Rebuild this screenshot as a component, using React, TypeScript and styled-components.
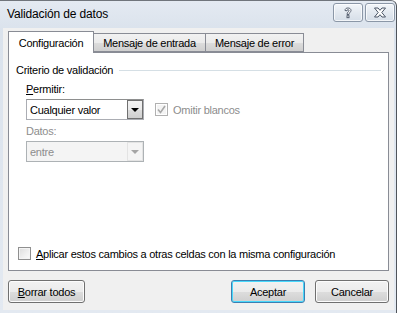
import React from "react";
import styled, { createGlobalStyle } from "styled-components";

const GlobalStyle = createGlobalStyle`
  html, body {
    margin: 0;
    padding: 0;
    background: #ffffff;
  }
  body {
    font-family: "Liberation Sans", Arial, sans-serif;
    font-size: 11px;
    letter-spacing: -0.25px;
    color: #000;
  }
`;

const Window = styled.div`
  width: 397px;
  height: 313px;
  box-sizing: border-box;
  display: flex;
  flex-direction: column;
  background: linear-gradient(180deg, #e4eaf2 0%, #dae2ec 30px, #e3e9f1 100%);
  border-top: 1px solid #70757c;
  border-right: 1px solid #4f545b;
  border-top-right-radius: 6px;
`;

const TitleBar = styled.div`
  height: 29px;
  display: flex;
  align-items: center;
  padding-left: 7px;
  padding-right: 1px;
  box-sizing: border-box;
`;

const Title = styled.div`
  flex: 1;
  font-size: 12px;
  letter-spacing: -0.15px;
  color: #000;
  padding-bottom: 1px;
`;

const CaptionButton = styled.div`
  width: 30px;
  height: 19px;
  box-sizing: border-box;
  margin-left: 2px;
  margin-bottom: 4px;
  border: 1px solid #8b97a7;
  border-radius: 3px;
  background: linear-gradient(180deg, #f3f6fa 0%, #e3e9f0 50%, #d6dee8 100%);
  box-shadow: inset 0 0 0 1px rgba(255, 255, 255, 0.7);
  display: flex;
  align-items: center;
  justify-content: center;
`;

const Client = styled.div`
  flex: 1;
  margin: 0 2px 3px 3px;
  background: #f0f0f0;
  display: flex;
  flex-direction: column;
  padding: 2px 5px 7px 5px;
`;

const TabRow = styled.div`
  display: flex;
  align-items: flex-end;
  height: 22px;
`;

const Tab = styled.div<{ $active?: boolean; $w: number }>`
  position: relative;
  box-sizing: border-box;
  width: ${(p) => p.$w}px;
  height: ${(p) => (p.$active ? 22 : 19)}px;
  margin-left: ${(p) => (p.$active ? 0 : -1)}px;
  margin-bottom: ${(p) => (p.$active ? -1 : 0)}px;
  z-index: ${(p) => (p.$active ? 2 : 1)};
  border: 1px solid #898c95;
  border-bottom: ${(p) => (p.$active ? "none" : "1px solid #898c95")};
  background: ${(p) =>
    p.$active
      ? "#ffffff"
      : "linear-gradient(180deg, #f2f2f2 0%, #ebebeb 50%, #dddddd 51%, #cfcfcf 100%)"};
  display: flex;
  align-items: center;
  justify-content: center;
  white-space: nowrap;
`;

const Panel = styled.div`
  height: 219px;
  box-sizing: border-box;
  border: 1px solid #898c95;
  background: #ffffff;
  display: flex;
  flex-direction: column;
  padding: 10px 7px 10px 7px;
`;

const GroupHeader = styled.div`
  display: flex;
  align-items: center;
  gap: 6px;
  height: 14px;
`;

const GroupLine = styled.div`
  flex: 1;
  height: 1px;
  background: #d5dfe5;
`;

const Fields = styled.div`
  margin-left: 10px;
  display: flex;
  flex-direction: column;
`;

const FieldLabel = styled.div<{ $disabled?: boolean }>`
  height: 14px;
  line-height: 14px;
  margin-top: ${(p) => (p.$disabled ? 4 : 5)}px;
  margin-bottom: 3px;
  color: ${(p) => (p.$disabled ? "#8d8d8d" : "#000")};
`;

const FieldRow = styled.div`
  display: flex;
  align-items: center;
  gap: 11px;
`;

const Combo = styled.div<{ $disabled?: boolean }>`
  width: 118px;
  height: 21px;
  box-sizing: border-box;
  border: 1px solid ${(p) => (p.$disabled ? "#adb2b5" : "#abadb3")};
  border-top-color: ${(p) => (p.$disabled ? "#adb2b5" : "#8e8f8f")};
  background: ${(p) => (p.$disabled ? "#f4f4f4" : "#ffffff")};
  display: flex;
  align-items: stretch;
`;

const ComboText = styled.div<{ $disabled?: boolean }>`
  flex: 1;
  display: flex;
  align-items: center;
  padding-left: 3px;
  color: ${(p) => (p.$disabled ? "#8d8d8d" : "#000")};
`;

const ComboButton = styled.div<{ $disabled?: boolean }>`
  width: 16px;
  box-sizing: border-box;
  border: 1px solid ${(p) => (p.$disabled ? "#e3e3e3" : "#707070")};
  background: ${(p) =>
    p.$disabled
      ? "#f4f4f4"
      : "linear-gradient(180deg, #f2f2f2 0%, #ebebeb 50%, #dddddd 51%, #cfcfcf 100%)"};
  display: flex;
  align-items: center;
  justify-content: center;
`;

const Arrow = styled.div<{ $disabled?: boolean }>`
  width: 0;
  height: 0;
  border-left: 4px solid transparent;
  border-right: 4px solid transparent;
  border-top: 4px solid ${(p) => (p.$disabled ? "#a5a5a5" : "#000")};
`;

const CheckWrap = styled.div<{ $disabled?: boolean }>`
  display: flex;
  align-items: center;
  gap: 5px;
  color: ${(p) => (p.$disabled ? "#8d8d8d" : "#000")};
`;

const CheckBox = styled.div<{ $disabled?: boolean }>`
  width: 13px;
  height: 13px;
  box-sizing: border-box;
  border: 1px solid ${(p) => (p.$disabled ? "#b1b1b1" : "#8f8f8f")};
  background: ${(p) =>
    p.$disabled
      ? "#f4f4f4"
      : "linear-gradient(135deg, #dcdcdc 0%, #f0f0f0 60%, #fbfbfb 100%)"};
  box-shadow: inset 0 0 0 1px ${(p) => (p.$disabled ? "#ffffff" : "#f4f4f4")};
  display: flex;
  align-items: center;
  justify-content: center;
`;

const Spacer = styled.div`
  flex: 1;
`;

const BottomCheck = styled(CheckWrap)`
  margin-left: 2px;
`;

const ButtonRow = styled.div`
  display: flex;
  align-items: center;
  margin-top: 9px;
`;

const Button = styled.div<{ $default?: boolean; $w: number }>`
  width: ${(p) => p.$w}px;
  height: 23px;
  box-sizing: border-box;
  border: 1px solid ${(p) => (p.$default ? "#3c7fb1" : "#707070")};
  border-radius: 3px;
  background: linear-gradient(180deg, #f2f2f2 0%, #ebebeb 50%, #dddddd 51%, #cfcfcf 100%);
  box-shadow: inset 0 0 0 1px ${(p) => (p.$default ? "#48d8fb" : "#fcfcfc")};
  display: flex;
  align-items: center;
  justify-content: center;
`;

const Gap = styled.div<{ $w?: number }>`
  ${(p) => (p.$w ? `width: ${p.$w}px;` : "flex: 1;")}
`;

export default function App() {
  return (
    <>
      <GlobalStyle />
      <Window>
        <TitleBar>
          <Title>Validación de datos</Title>
          <CaptionButton>
            <svg width="10" height="12" viewBox="0 0 10 12">
              <path
                d="M2 3.5 C2 1.5 3.5 1 5 1 C6.8 1 8 2 8 3.5 C8 5 6 5.5 6 7.5 L4 7.5 C4 5 6 4.8 6 3.6 C6 3 5.6 2.6 5 2.6 C4.3 2.6 4 3 4 3.8 Z"
                fill="#ffffff"
                stroke="#4a5566"
                strokeWidth="0.9"
              />
              <rect x="4" y="8.7" width="2" height="2" fill="#ffffff" stroke="#4a5566" strokeWidth="0.9" />
            </svg>
          </CaptionButton>
          <CaptionButton>
            <svg width="14" height="11" viewBox="0 0 14 11">
              <path
                d="M1.5 1 L5 1 L7 3.3 L9 1 L12.5 1 L8.8 5.5 L12.5 10 L9 10 L7 7.7 L5 10 L1.5 10 L5.2 5.5 Z"
                fill="#ffffff"
                stroke="#4a5566"
                strokeWidth="1"
                strokeLinejoin="round"
              />
            </svg>
          </CaptionButton>
        </TitleBar>
        <Client>
          <TabRow>
            <Tab $active $w={86}>Configuración</Tab>
            <Tab $w={113}>Mensaje de entrada</Tab>
            <Tab $w={99}>Mensaje de error</Tab>
          </TabRow>
          <Panel>
            <GroupHeader>
              <span>Criterio de validación</span>
              <GroupLine />
            </GroupHeader>
            <Fields>
              <FieldLabel>
                <u>P</u>ermitir:
              </FieldLabel>
              <FieldRow>
                <Combo>
                  <ComboText>Cualquier valor</ComboText>
                  <ComboButton>
                    <Arrow />
                  </ComboButton>
                </Combo>
                <CheckWrap $disabled>
                  <CheckBox $disabled>
                    <svg width="9" height="9" viewBox="0 0 9 9">
                      <path d="M1 4.5 L3.5 7.5 L8 1" fill="none" stroke="#a8a8a8" strokeWidth="1.6" />
                    </svg>
                  </CheckBox>
                  <span>Omitir blancos</span>
                </CheckWrap>
              </FieldRow>
              <FieldLabel $disabled>Datos:</FieldLabel>
              <FieldRow>
                <Combo $disabled>
                  <ComboText $disabled>entre</ComboText>
                  <ComboButton $disabled>
                    <Arrow $disabled />
                  </ComboButton>
                </Combo>
              </FieldRow>
            </Fields>
            <Spacer />
            <BottomCheck>
              <CheckBox />
              <span>
                <u>A</u>plicar estos cambios a otras celdas con la misma configuración
              </span>
            </BottomCheck>
          </Panel>
          <ButtonRow>
            <Button $w={77}>
              <span>
                <u>B</u>orrar todos
              </span>
            </Button>
            <Gap />
            <Button $default $w={74}>
              Aceptar
            </Button>
            <Gap $w={10} />
            <Button $w={74}>Cancelar</Button>
          </ButtonRow>
        </Client>
      </Window>
    </>
  );
}
